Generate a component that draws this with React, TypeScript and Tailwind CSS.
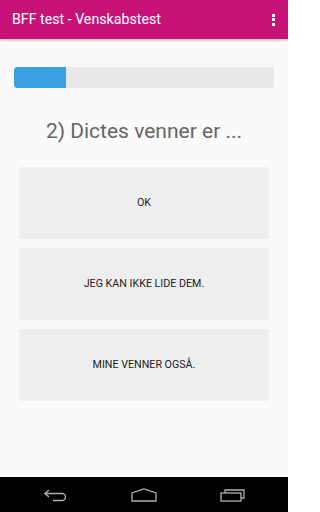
import React from 'react';

const answers = ['OK', 'Jeg kan ikke lide dem.', 'Mine venner også.'];

export default function App() {
  return (
    <div className="w-[288px] h-[512px] flex flex-col bg-[#fafafa] overflow-hidden" style={{ fontFamily: 'Roboto, "Noto Sans", sans-serif' }}>
      {/* Toolbar */}
      <div className="h-[39px] shrink-0 bg-[#c71378] flex items-center justify-between pl-3 pr-[13px] shadow-[0_1px_3px_rgba(0,0,0,0.3)] relative z-10">
        <span className="text-white text-[14.2px]">BFF test - Venskabstest</span>
        <div className="flex flex-col gap-[1.5px]">
          <span className="w-[3px] h-[3px] bg-white" />
          <span className="w-[3px] h-[3px] bg-white" />
          <span className="w-[3px] h-[3px] bg-white" />
        </div>
      </div>

      {/* Content */}
      <div className="flex-1 flex flex-col">
        <div className="mx-[14px] mt-[28px] h-[21px] rounded-[3px] bg-[#e9e9e9] overflow-hidden">
          <div className="h-full w-[52px] bg-[#3aa0e2] rounded-l-[3px]" />
        </div>

        <h1 className="mt-[28px] text-center text-[21px] leading-[30px] text-[#666666]">2) Dictes venner er ...</h1>

        <div className="mt-[21px] mx-[19px] flex flex-col gap-[9px]">
          {answers.map((a) => (
            <button key={a} className="h-[72px] rounded-[3px] bg-[#eeeeee] text-[10.7px] uppercase text-[#222222]">
              {a}
            </button>
          ))}
        </div>
      </div>

      {/* Nav bar */}
      <div className="h-[35px] shrink-0 bg-black flex items-center justify-between px-[43px]">
        <svg width="26" height="14" viewBox="0 0 26 14" fill="none" stroke="#b0b0b0" strokeWidth="1.3">
          <path d="M6 2 L2 5.5 L6 9" />
          <path d="M2 5.5 H19 a3.5 3.5 0 0 1 0 7 H10" />
        </svg>
        <svg width="28" height="14" viewBox="0 0 28 14" fill="none" stroke="#b0b0b0" strokeWidth="1.3">
          <path d="M2 13 V5 L14 1 L26 5 V13 Z" />
        </svg>
        <svg width="26" height="14" viewBox="0 0 26 14" fill="none" stroke="#b0b0b0" strokeWidth="1.3">
          <rect x="2" y="5" width="20" height="8" />
          <path d="M6 5 V2 H25 V10 H22" />
        </svg>
      </div>
    </div>
  );
}
